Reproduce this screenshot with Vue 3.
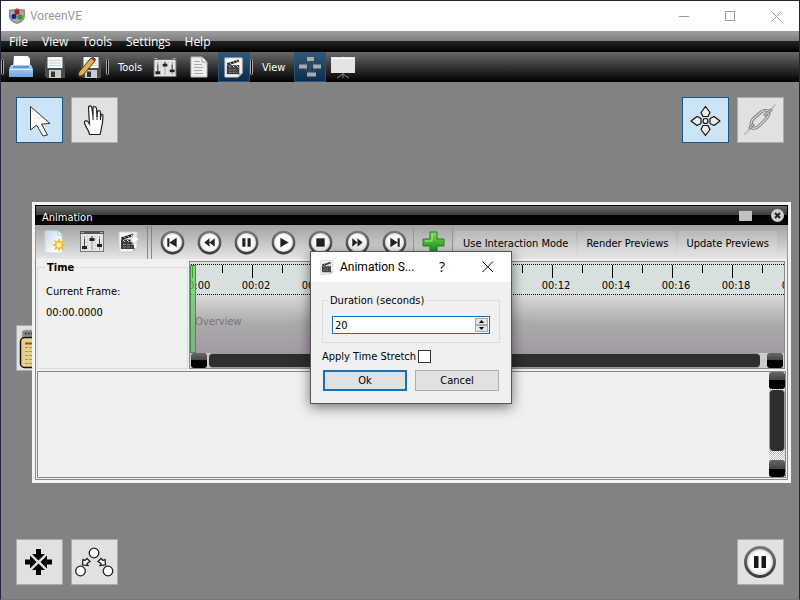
<script setup>
import { ref } from 'vue'

const menus = ['File', 'View', 'Tools', 'Settings', 'Help']
const duration = ref('20')
const stretch = ref(false)
const transport = [
  { name: 'First frame', d: 'M7 8h2v8H7zM16 7.500v9L9 12z' },
  { name: 'Rewind', d: 'M12 8v8l-5-4zM17 8v8l-5-4z' },
  { name: 'Pause', d: 'M8 8h3v8H8zM13 8h3v8h-3z' },
  { name: 'Play', d: 'M9 7.500v9l8-4.500z' },
  { name: 'Stop', d: 'M8 8h8v8H8z' },
  { name: 'Forward', d: 'M7 8v8l5-4zM12 8v8l5-4z' },
  { name: 'Last frame', d: 'M8 7.500v9l7-4.500zM15 8h2v8h-2z' },
]
const actions = ['Use Interaction Mode', 'Render Previews', 'Update Previews']
const times = ['00:00', '00:02', '00:04', '00:06', '00:08', '00:10', '00:12', '00:14', '00:16', '00:18', '00:20']
</script>

<template>
  <div class="window">
    <svg class="defs" aria-hidden="true">
      <defs>
        <linearGradient id="blue" x2="0" y2="1"><stop stop-color="#b4d4f8" /><stop offset="1" stop-color="#6ea4e4" /></linearGradient>
        <linearGradient id="ring" x2="0" y2="1"><stop stop-color="#777" /><stop offset="1" stop-color="#3c3c3c" /></linearGradient>
        <linearGradient id="paper" x2="1" y2="1"><stop stop-color="#bcd6f0" /><stop offset=".6" stop-color="#f4f8fc" /><stop offset="1" stop-color="#fff" /></linearGradient>
        <radialGradient id="dome"><stop stop-color="#fff" /><stop offset=".7" stop-color="#fafafa" /><stop offset="1" stop-color="#c4c4c4" /></radialGradient>
        <linearGradient id="leaf" x2="0" y2="1"><stop stop-color="#7cdc58" /><stop offset="1" stop-color="#1c8a1c" /></linearGradient>
      </defs>
      <symbol id="mixer" viewBox="0 0 24 22">
        <rect x=".5" y=".5" width="23" height="20" fill="#e6e6e6" stroke="#777" />
        <path d="M0 0h24v3H0z" fill="#555" /><path d="M1 1h3v1H1zM20 1h3v1h-3z" fill="#aaa" />
        <path d="M4.500 5v14M12 5v14M19.500 5v14" stroke="#999" />
        <path d="M7.500 5v14M15.500 5v14" stroke="#bbb" stroke-dasharray="1 2" />
        <path d="M2 15h5v3H2zM9.500 7h5v3h-5zM17 13h5v3h-5z" fill="#222" />
        <path d="M4.500 8v7M12 5v3M19.500 8v5" stroke="#444" />
      </symbol>
      <symbol id="clap" viewBox="0 0 22 22">
        <path d="M1 1h18v16l-4 4H1z" fill="#f4f4f4" stroke="#ccc" />
        <path d="M19 17h-4v4z" fill="#bbb" />
        <path d="M3 8.500h13V18H3z" fill="#3c3c3c" />
        <path d="M3 6.500l12-4 1 2.500-12 4z" fill="#222" />
        <path d="M6 5.500l1.500 2M9.500 4.500l1.500 2M13 3.500l1 2M5 9l2 2M9 9l2 2M13 9l2 2" stroke="#ddd" />
        <path d="M5 13.500h9M5 16h9" stroke="#888" stroke-dasharray="3 1" />
      </symbol>
      <symbol id="floppy" viewBox="0 0 20 22">
        <path d="M0 0h20v22H2l-2-2z" fill="#4c4c4c" /><path d="M2.500 1h15v11h-15z" fill="#f4f6f8" />
        <path d="M4 4.500h12M4 7h12M4 9.500h12" stroke="#c4d4e0" />
        <path d="M4 14h12v8H4z" fill="#ccc" /><path d="M6 15.500h4V21H6z" fill="#333" />
      </symbol>
    </svg>

    <header class="titlebar">
      <svg class="logo" viewBox="0 0 16 16">
        <path d="M0 1.500C4 1.500 6 1 8 0c2 1 4 1.500 8 1.500V8c0 4-4 7-8 8-4-1-8-4-8-8z" fill="#888" />
        <path d="M1.500 3C4 3 6 2.500 8 1.500c2 1 4 1.500 6.500 1.500V8c0 3-3 5.500-6.500 6.500C4.500 13.500 1.500 11 1.500 8z" fill="#aaa" />
        <rect x="5.500" y="1.500" width="5" height="5" rx="2" fill="#b4181c" />
        <rect x="2.500" y="6" width="5" height="5" rx="2" fill="#1c2294" />
        <rect x="8.500" y="6.500" width="5" height="5" rx="2" fill="#2a9830" />
      </svg>
      <h1>VoreenVE</h1>
      <button aria-label="Minimize"><svg viewBox="0 0 11 11"><path d="M0 5.500h10" /></svg></button>
      <button aria-label="Maximize"><svg viewBox="0 0 11 11"><path d="M.5.5h9v9h-9z" /></svg></button>
      <button aria-label="Close"><svg viewBox="0 0 11 11"><path d="M.5.5l10 10M10.500.5l-10 10" /></svg></button>
    </header>

    <nav class="menubar"><button v-for="m in menus" :key="m">{{ m }}</button></nav>

    <div class="toolbar">
      <i class="grip"></i>
      <button aria-label="Open"><svg width="24" height="22" viewBox="0 0 24 22"><path d="M5 0h14l2 3v9H4z" fill="#fff" /><path d="M2 9h20l2 4v8H0v-8z" fill="url(#blue)" /><path d="M1 13.500h22" stroke="#d6e8fc" /><path d="M4 11h16" stroke="#5c94d8" stroke-width="2" /></svg></button>
      <button aria-label="Save"><svg width="20" height="22"><use href="#floppy" /></svg></button>
      <button aria-label="Save as"><svg width="24" height="23" viewBox="0 0 24 23"><svg x="4" y="0" width="20" height="22"><use href="#floppy" /></svg><path d="M1 21l1-5L14 2l4 3L6 19z" fill="#e0b050" stroke="#5c3a10" /><path d="M14 2l2-1 3 2-1 2z" fill="#a01818" /><path d="M0 22l1.500-3 1.500 1z" fill="#111" /></svg></button>
      <i class="grip"></i>
      <span class="label tools">Tools</span>
      <button aria-label="Property lists"><svg width="24" height="21"><use href="#mixer" /></svg></button>
      <button aria-label="Console"><svg width="18" height="22" viewBox="0 0 18 22"><path d="M1 1h11l5 5v15H1z" fill="#eee" stroke="#bbb" /><path d="M12 1v5h5" fill="#fff" stroke="#999" /><path d="M4 5.500h6M4 8.500h8M4 11.500h9M4 14.500h8M4 17.500h9" stroke="#aaa" /></svg></button>
      <button aria-label="Animation editor" class="on"><svg width="21" height="23"><use href="#clap" /></svg></button>
      <i class="grip"></i>
      <span class="label view">View</span>
      <button aria-label="Network mode" class="on"><svg width="24" height="20" viewBox="0 0 24 20"><path d="M12 2L4 9.500M12 2l7 7.500M12 2v15M4 9.500l9 7.500 6-7" stroke="#3c5c74" fill="none" /><path d="M9 0h7v4H9zM1 7.500h8v4H1zM15 7.500h8v4h-8zM9 15.500h9v4H9z" fill="#aaa" /></svg></button>
      <button aria-label="Visualization mode"><svg width="24" height="23" viewBox="0 0 24 23"><path d="M12 0v22M12 18l-6 4M12 18l6 4" stroke="#888" fill="none" /><path d="M0 1h24v16H0z" fill="#e4e4e4" /><path d="M1 2.500h22" stroke="#fff" /></svg></button>
    </div>

    <main class="canvas">
      <div class="tiles">
        <button class="tile on" aria-label="Select"><svg viewBox="0 0 47 46"><path d="M14.500 9.500v23.500l6-5 6.500 11 4.500-1-6-11 8.500-.5z" fill="#fff" stroke="#333" /></svg></button>
        <button class="tile" aria-label="Pan"><svg viewBox="0 0 47 46"><path d="M18.500 37.500c-.5-4-3-6-4.500-10-1.500-3.500 1-5 3-2.500l1.500 2-1-15.500c0-3.500 3-3.500 3.500 0l1 8V11.500c0-2.500 3-2.500 3.500 0l.5 8.500.5-5c.5-2 3-2 3 .5v6l.5-3c.5-2 2-1.500 2 .5 0 8-1.500 12-3 18.500z" fill="#fff" stroke="#222" stroke-width="1.200" /><path d="M22 19v4M26 19v4M29.500 20v3" stroke="#222" /></svg></button>
        <span class="fill"></span>
        <button class="tile on" aria-label="Trackball"><svg viewBox="0 0 47 46"><g fill="#f0eee8" stroke="#111" stroke-width="1.200" stroke-linejoin="round"><path d="M23.500 9.500l4.500 6-2 4h-5l-2-4zM23.500 38.500l4.500-6-2-4h-5l-2 4zM9 24l6-4.500 4 2v5l-4 2zM38 24l-6-4.500-4 2v5l4 2z" /><circle cx="23.500" cy="24" r="2.500" /></g></svg></button>
        <button class="tile" aria-label="Link"><svg viewBox="0 0 47 46"><g fill="none" stroke-linecap="round"><path d="M8 37l8-8M30 17l8-9" stroke="#c4c4c4" stroke-width="2" /><path d="M16 22l8-7c3-2 8-2 8 1s-2 5-4 7l-6 6c-3 3-8 3-8 0s0-5 2-7z" stroke="#777" stroke-width="3" /><path d="M16 22l8-7c3-2 8-2 8 1s-2 5-4 7l-6 6c-3 3-8 3-8 0s0-5 2-7z" stroke="#d8d8d8" stroke-width="1.300" /><path d="M28 18l6-5M16 28l-3 3" stroke="#888" stroke-width="3" /><path d="M28 18l6-5M16 28l-3 3" stroke="#ddd" /></g></svg></button>
      </div>
      <div class="tiles">
        <button class="tile" aria-label="Center"><svg viewBox="0 0 47 46"><path d="M20 10h5v5h4l-6.500 6.500L16 15h4zM20 36h5v-5h4l-6.500-6.500L16 31h4zM9 20.500v5h5v4l6.500-6.500L14 16.500v4zM36 20.500v5h-5v4l-6.500-6.500 6.500-6.500v4z" fill="#000" /></svg></button>
        <button class="tile" aria-label="Layout graph"><svg viewBox="0 0 47 46"><g fill="#fff" stroke="#222" stroke-width="1.300"><circle cx="23" cy="14" r="4.800" /><circle cx="9.500" cy="32" r="4.800" /><circle cx="37" cy="32" r="4.800" /><path d="M16 19.500l3 3-3 2 1 2-5.500-.5.5-5.500 2 1zM30 19.500l-3 3 3 2-1 2 5.500-.5-.5-5.500-2 1z" /></g></svg></button>
        <span class="fill"></span>
        <button class="tile" aria-label="Pause"><svg viewBox="0 0 47 46"><circle cx="23" cy="23" r="14.500" fill="url(#dome)" stroke="url(#ring)" stroke-width="3" /><path d="M17 17h4.500v12H17zM24.500 17H29v12h-4.500z" fill="#1a1a1a" /></svg></button>
      </div>

      <button class="tile note" aria-label="Text note"><svg viewBox="0 0 47 46"><path d="M6 12V6l3-1h30v8z" fill="#888" stroke="#bbb" /><path d="M9 8.500h20" stroke="#444" stroke-width="2" stroke-dasharray="2 1" /><rect x="4.500" y="12.500" width="38" height="30" rx="4" fill="#e6d08c" stroke="#111" stroke-width="1.500" /><path d="M9 18.500h30" stroke="#76602c" stroke-width="2" /><path d="M9 22.500h30M9 26.500h30M9 30.500h30M9 34.500h30M9 38.500h30" stroke="#a89458" stroke-dasharray="3 1" /></svg></button>

      <section class="anim">
        <header class="anim-title">
          <h2>Animation</h2>
          <button class="restore" aria-label="Restore"></button>
          <button class="shut" aria-label="Close animation"><svg viewBox="0 0 13 13"><circle cx="6.500" cy="6.500" r="6.500" fill="#d0d0d0" /><path d="M4 4l5 5M9 4l-5 5" stroke="#222" stroke-width="2" /></svg></button>
        </header>
        <div class="anim-bar">
          <button class="big" aria-label="New"><svg width="22" height="24" viewBox="0 0 22 24"><path d="M1 1h13l4 4v18H1z" fill="url(#paper)" stroke="#c8d8e8" /><path d="M14 1v4h4" fill="#fff" stroke="#b4c4d8" /><path d="M15 8l1.500 3.500L20 10l-1.500 3.500L22 15l-3.500 1.500L20 20l-3.500-1.500L15 22l-1.500-3.500L10 20l1.500-3.500L8 15l3.500-1.500L10 10l3.500 1.500z" fill="#f0bc34" /><circle cx="15" cy="15" r="2.500" fill="#fff4b0" /></svg></button>
          <button class="big" aria-label="Settings"><svg width="24" height="22"><use href="#mixer" /></svg></button>
          <button class="big" aria-label="Export"><svg width="22" height="22"><use href="#clap" /><path d="M15 3l6 5-6 6v-3h-2V6h2z" fill="#fff" stroke="#ccc" /></svg></button>
          <i class="double"></i>
          <button v-for="t in transport" :key="t.name" class="round" :aria-label="t.name">
            <svg width="25" height="25" viewBox="0 0 24 24"><circle cx="12" cy="12" r="10.300" fill="url(#dome)" stroke="url(#ring)" stroke-width="2.200" /><path :d="t.d" fill="#222" /></svg>
          </button>
          <i class="rule"></i>
          <button class="plus" aria-label="Add key frame"><svg width="23" height="23" viewBox="0 0 23 23"><path d="M8 1h7v7h7v7h-7v7H8v-7H1V8h7z" fill="url(#leaf)" stroke="#228022" /><path d="M10 3v7H3" stroke="#a8f088" fill="none" /></svg></button>
          <i class="rule"></i>
          <button v-for="a in actions" :key="a" class="action">{{ a }}</button>
        </div>
        <div class="frame">
          <div class="anim-body">
            <fieldset class="time">
              <legend>Time</legend>
              <p>Current Frame:</p>
              <p>00:00.0000</p>
            </fieldset>
            <div class="timeline">
              <div class="ruler"><ol><li v-for="t in times" :key="t">{{ t }}</li></ol></div>
              <div class="overview">Overview</div>
              <div class="marker"></div>
              <div class="hscroll"><i class="knob"></i><i class="thumb"></i><i class="knob"></i></div>
            </div>
          </div>
          <div class="lower">
            <div class="vscroll"><i class="knob"></i><i class="thumb"></i><i class="knob"></i></div>
          </div>
        </div>
      </section>

      <form class="dialog" role="dialog" aria-labelledby="dlg-title" @submit.prevent>
        <header>
          <svg class="dlg-icon" viewBox="0 0 22 22"><use href="#clap" /></svg>
          <h3 id="dlg-title">Animation S...</h3>
          <button type="button" class="help">?</button>
          <button type="button" aria-label="Close dialog"><svg viewBox="0 0 12 12"><path d="M.5.5l10.500 10.500M11 .5L.5 11" /></svg></button>
        </header>
        <div class="dlg-body">
          <fieldset class="group">
            <legend><label for="duration">Duration (seconds)</label></legend>
            <div class="spin">
              <input id="duration" v-model="duration" type="text" inputmode="numeric" />
              <div class="steps">
                <button type="button" aria-label="Increase" @click="duration = String(+duration + 1)"><svg viewBox="0 0 5 3"><path d="M0 3h5L2.500 0z" /></svg></button>
                <button type="button" aria-label="Decrease" @click="duration = String(+duration - 1)"><svg viewBox="0 0 5 3"><path d="M0 0h5L2.500 3z" /></svg></button>
              </div>
            </div>
          </fieldset>
          <div class="stretch">
            <label for="stretch">Apply Time Stretch</label>
            <input id="stretch" v-model="stretch" type="checkbox" />
          </div>
          <div class="answers">
            <button class="default">Ok</button>
            <button type="button">Cancel</button>
          </div>
        </div>
      </form>
    </main>
  </div>
</template>

<style>
body {
  background: #828282;
}
</style>

<style scoped>
* {
  box-sizing: border-box;
  margin: 0;
}
.window {
  display: flex;
  flex-direction: column;
  min-height: 100vh;
  border: 1px solid #26263a;
  border-bottom-color: #777;
  font: 11px/13px 'DejaVu Sans Condensed', 'DejaVu Sans', sans-serif;
  color: #000;
}
.defs {
  position: absolute;
  width: 0;
  height: 0;
}
svg {
  display: block;
  flex: none;
}
button {
  display: flex;
  align-items: center;
  justify-content: center;
  padding: 0;
  border: 0;
  background: none;
  font: inherit;
  color: inherit;
}
h1, h2, h3 {
  font-weight: 400;
}

.titlebar {
  display: flex;
  align-items: center;
  height: 30px;
  padding-left: 8px;
  background: #fff;
}
.logo {
  width: 16px;
  height: 16px;
}
.titlebar h1 {
  flex: 1;
  margin-left: 5px;
  font: 12px/16px Roboto, sans-serif;
  color: #999;
}
.titlebar button {
  width: 46px;
  height: 30px;
}
.titlebar button svg {
  width: 11px;
  height: 11px;
  fill: none;
  stroke: #999;
}

.menubar {
  display: flex;
  height: 21px;
  padding-left: 8px;
  gap: 14px;
  background: linear-gradient(#a0a0a0, #7c7c7c 49%, #222 50%, #000);
  font: 12px/21px 'Open Sans', sans-serif;
  color: #fff;
}
.toolbar {
  display: flex;
  align-items: center;
  height: 30px;
  background: linear-gradient(#686868, #000);
  color: #fff;
}
.toolbar button {
  width: 34px;
  height: 30px;
}
.toolbar button.on {
  width: 32px;
  margin-left: 2px;
  background: linear-gradient(#305878, #0c2c4c);
  border: 1px solid #2c5474;
}
.grip {
  width: 3px;
  height: 16px;
  border: 1px solid #aaa;
  border-radius: 2px;
  background: #000;
}
.label {
  width: 39px;
  padding: 1px 0 0 9px;
}

.canvas {
  position: relative;
  display: flex;
  flex: 1;
  flex-direction: column;
  justify-content: space-between;
  padding: 15px 15px 14px;
  background: #828282;
}
.tiles {
  display: flex;
  gap: 8px;
}
.fill {
  flex: 1;
}
.tile {
  width: 47px;
  height: 46px;
  border: 1px solid #aaa;
  background: #e1e1e1;
}
.tile.on {
  border-color: #1c5482;
  background: #cce4f8;
}
.tile svg {
  width: 47px;
  height: 46px;
}
.note {
  position: absolute;
  left: 15px;
  top: 243px;
}

.anim {
  position: absolute;
  left: 31px;
  right: 8px;
  top: 120px;
  border: 3px solid #f4f4f4;
  background: #f0f0f0;
}
.anim-title {
  display: flex;
  align-items: center;
  height: 20px;
  padding: 0 3px 0 6px;
  border: 1px solid #000;
  background: linear-gradient(#686868, #3c3c3c 49%, #000 50%, #080808);
  color: #fff;
}
.anim-title h2 {
  flex: 1;
  padding-top: 4px;
  font-size: 11px;
}
.restore {
  width: 13px;
  height: 11px;
  margin-right: 19px;
  border-top: 1px solid #666;
  background: #c0c0c0;
}
.shut svg {
  width: 13px;
  height: 13px;
}
.anim-bar {
  display: flex;
  align-items: center;
  height: 34px;
  border: solid #999;
  border-width: 0 1px;
  background: linear-gradient(#a2a2a2, #e6e6e6);
}
.big {
  width: 37px;
}
.double {
  width: 5px;
  height: 34px;
  margin-right: 2px;
  border: solid #888;
  border-width: 0 1px;
}
.round {
  width: 37px;
}
.rule {
  width: 1px;
  height: 30px;
  background: #999;
}
.plus {
  width: 38px;
}
.action {
  height: 22px;
  margin-left: 2px;
  padding: 2px 8px 0;
  background: #ffffff22;
}
.frame {
  padding: 2px 1px 1px;
  border: solid #888;
  border-width: 0 1px 1px;
}
.anim-body {
  display: flex;
  gap: 1px;
  padding-right: 1px;
}
.time {
  width: 151px;
  padding: 11px 8px 0;
  border: 1px solid #dcdcdc;
}
.time legend {
  padding: 0 2px;
  margin-left: -1px;
  font-weight: 700;
}
.time p {
  margin-bottom: 8px;
}
.timeline {
  position: relative;
  flex: 1;
  min-width: 0;
  display: flex;
  flex-direction: column;
  border: 1px solid #888;
  overflow: hidden;
}
.ruler {
  height: 33px;
  padding-top: 2px;
  background: #d8e0e0;
  overflow: hidden;
}
.ruler ol {
  display: flex;
  height: 31px;
  width: 684px;
  margin-left: -24px;
  padding: 14px 0 0;
  list-style: none;
  border: dotted #000;
  border-width: 1px 0;
  background:
    linear-gradient(90deg, #000 1px, transparent 1px) 26px 0 / 60px 13px repeat-x,
    linear-gradient(90deg, #000 1px, transparent 1px) 56px 0 / 60px 8px repeat-x;
}
.ruler li {
  flex: none;
  width: 60px;
  text-align: center;
}
.overview {
  height: 58px;
  padding: 20px 0 0 5px;
  background: linear-gradient(#dadada, #aaa 50%, #a698a8);
  color: #777;
}
.marker {
  position: absolute;
  left: 0;
  top: 3px;
  width: 6px;
  height: 88px;
  border: 1px solid #4c8c4c;
  background: linear-gradient(#58d850bb 30px, #70c070bb 30px);
}
.hscroll {
  display: flex;
  gap: 2px;
  height: 15px;
  padding: 0 1px;
  background: #ccc;
}
.knob {
  flex: none;
  width: 16px;
  height: 15px;
  border-radius: 3px;
  background: linear-gradient(#666, #444 50%, #000 50%);
}
.thumb {
  flex: 1;
  border: 1px solid #999;
  border-width: 1px 0;
  border-radius: 4px;
  background: #2e2e2e;
}
.hscroll .thumb {
  margin-right: 5px;
}
.lower {
  display: flex;
  justify-content: flex-end;
  height: 107px;
  margin-top: 2px;
  border: 1px solid #888;
}
.vscroll {
  display: flex;
  flex-direction: column;
  width: 16px;
  background: repeating-conic-gradient(#fff 0 25%, #bbb 0 50%) 0 0 / 2px 2px;
}
.vscroll .thumb {
  margin: 1px 0 9px;
  border-width: 0 1px;
}
.vscroll .knob {
  height: 17px;
}

.dialog {
  position: absolute;
  left: 309px;
  top: 169px;
  width: 202px;
  border: 1px solid #555;
  background: #f0f0f0;
  box-shadow: 0 3px 12px #0008;
}
.dialog header {
  display: flex;
  align-items: center;
  height: 30px;
  padding-left: 9px;
  background: #fff;
}
.dlg-icon {
  width: 15px;
  height: 15px;
}
.dialog h3 {
  flex: 1;
  margin-left: 5px;
  font: 12px/16px Roboto, sans-serif;
}
.dialog header button {
  width: 46px;
  height: 30px;
}
.dialog header button svg {
  width: 12px;
  height: 12px;
  fill: none;
  stroke: #000;
}
.dialog .help {
  font: 14px/16px 'Open Sans', sans-serif;
}
.dlg-body {
  padding: 12px 11px 12px;
}
.group {
  height: 49px;
  padding: 9px 9px 0;
  border: 1px solid #dcdcdc;
}
.group legend {
  margin-left: -4px;
  padding: 0 2px;
}
.spin {
  display: flex;
  height: 18px;
  border: 1px solid #1a70b8;
  background: #fff;
}
.spin input {
  flex: 1;
  min-width: 0;
  padding: 1px 2px 0;
  border: 0;
  outline: 0;
  background: none;
  font: inherit;
}
.steps {
  width: 15px;
  display: grid;
  grid-template-rows: 1fr 1fr;
  padding: 1px;
}
.steps button {
  background: #e4e4e4;
  border: 1px solid #aaa;
}
.steps svg {
  width: 5px;
  height: 3px;
}
.stretch {
  display: flex;
  align-items: center;
  gap: 2px;
  margin-top: 7px;
}
.stretch input {
  appearance: none;
  width: 13px;
  height: 13px;
  border: 1px solid #333;
  background: #fff;
}
.answers {
  display: grid;
  grid-template-columns: 1fr 1fr;
  gap: 8px;
  margin: 7px 1px 0;
}
.answers button {
  height: 21px;
  border: 1px solid #adadad;
  background: #e1e1e1;
}
.answers .default {
  border: 2px solid #1a70b8;
}
</style>
